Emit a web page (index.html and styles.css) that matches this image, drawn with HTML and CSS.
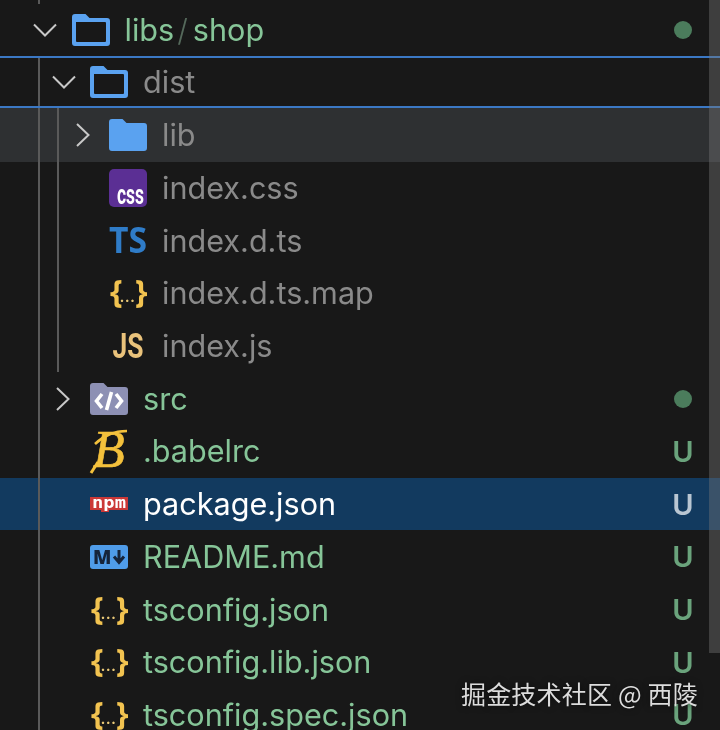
FILE: index.html
```html
<!DOCTYPE html>
<html lang="en">
<head>
<meta charset="utf-8">
<title>Explorer</title>
<link rel="stylesheet" href="styles.css">
</head>
<body>
<svg class="defs" width="0" height="0" aria-hidden="true">
  <defs>
    <symbol id="chev-down" viewBox="0 0 24 24"><path d="M1 6.500 12 17.500 23 6.500" fill="none" stroke="#c8c8c8" stroke-width="2"/></symbol>
    <symbol id="chev-right" viewBox="0 0 24 24"><path d="M6 1 17.500 12 6 23" fill="none" stroke="#c8c8c8" stroke-width="2"/></symbol>
    <symbol id="folder-open" viewBox="0 0 38 38"><path fill="#5aa2f0" fill-rule="evenodd" d="M3 3h10.500l4 4H35a3 3 0 0 1 3 3v22a3 3 0 0 1-3 3H3a3 3 0 0 1-3-3V6a3 3 0 0 1 3-3ZM4 11v19a1 1 0 0 0 1 1h28a1 1 0 0 0 1-1V12a1 1 0 0 0-1-1Z"/></symbol>
    <symbol id="folder-solid" viewBox="0 0 38 38"><path fill="#5aa2f0" d="M3 3h10.500l4 4H35a3 3 0 0 1 3 3v22a3 3 0 0 1-3 3H3a3 3 0 0 1-3-3V6a3 3 0 0 1 3-3Z"/></symbol>
    <symbol id="json" viewBox="0 0 38 38">
      <text class="ic-brace" x="1" y="29">{</text>
      <text class="ic-dots" x="11" y="27.500">...</text>
      <text class="ic-brace" x="26" y="29">}</text>
    </symbol>
  </defs>
</svg>
<main class="tree">
  <div class="row row-sliver"><i class="guide"></i></div>

  <div class="row row-root depth-0">
    <span class="twistie"><svg class="chev"><use href="#chev-down"/></svg></span>
    <svg class="icon"><use href="#folder-open"/></svg>
    <span class="label green">libs<span class="sep">/</span>shop</span>
    <span class="badge"><span class="dot"></span></span>
  </div>

  <div class="row row-drop depth-1">
    <i class="guide"></i>
    <span class="twistie"><svg class="chev"><use href="#chev-down"/></svg></span>
    <svg class="icon"><use href="#folder-open"/></svg>
    <span class="label grey">dist</span>
  </div>

  <div class="row row-hover depth-1">
    <i class="guide"></i><i class="guide"></i>
    <span class="twistie"><svg class="chev"><use href="#chev-right"/></svg></span>
    <svg class="icon"><use href="#folder-solid"/></svg>
    <span class="label grey">lib</span>
  </div>

  <div class="row depth-1">
    <i class="guide"></i><i class="guide"></i>
    <span class="twistie"></span>
    <svg class="icon" viewBox="0 0 38 38">
      <rect x="0" y="0" width="38" height="38" rx="5" fill="#5b2f94"/>
      <text class="ic-css" x="35" y="34.500" text-anchor="end" textLength="27" lengthAdjust="spacingAndGlyphs">css</text>
    </svg>
    <span class="label grey">index.css</span>
  </div>

  <div class="row depth-1">
    <i class="guide"></i><i class="guide"></i>
    <span class="twistie"></span>
    <svg class="icon" viewBox="0 0 38 38"><text class="ic-ts" x="19" y="31" text-anchor="middle" textLength="38" lengthAdjust="spacingAndGlyphs">TS</text></svg>
    <span class="label grey">index.d.ts</span>
  </div>

  <div class="row depth-1">
    <i class="guide"></i><i class="guide"></i>
    <span class="twistie"></span>
    <svg class="icon"><use href="#json"/></svg>
    <span class="label grey">index.d.ts.map</span>
  </div>

  <div class="row depth-1">
    <i class="guide"></i><i class="guide"></i>
    <span class="twistie"></span>
    <svg class="icon" viewBox="0 0 38 38"><text class="ic-js" x="19" y="31" text-anchor="middle" textLength="31" lengthAdjust="spacingAndGlyphs">JS</text></svg>
    <span class="label grey">index.js</span>
  </div>

  <div class="row depth-1">
    <i class="guide"></i>
    <span class="twistie"><svg class="chev"><use href="#chev-right"/></svg></span>
    <svg class="icon" viewBox="0 0 38 38">
      <path fill="#8d90b4" d="M3 3h10.500l4 4H35a3 3 0 0 1 3 3v22a3 3 0 0 1-3 3H3a3 3 0 0 1-3-3V6a3 3 0 0 1 3-3Z"/>
      <path d="M12 14 6.500 21 12 28M26 14 31.500 21 26 28M21.500 12 16.500 30" fill="none" stroke="#fff" stroke-width="3.600"/>
    </svg>
    <span class="label green">src</span>
    <span class="badge"><span class="dot"></span></span>
  </div>

  <div class="row depth-1">
    <i class="guide"></i>
    <span class="twistie"></span>
    <svg class="icon" viewBox="0 0 38 38">
      <text class="ic-babel" x="3" y="35">B</text>
      <path d="M5 12C13 4 25 -1 37 -1" fill="none" stroke="#f4c13c" stroke-width="2.500"/>
      <path d="M1 41 8 30" fill="none" stroke="#f4c13c" stroke-width="3"/>
    </svg>
    <span class="label green">.babelrc</span>
    <span class="badge">U</span>
  </div>

  <div class="row row-active depth-1">
    <i class="guide"></i>
    <span class="twistie"></span>
    <svg class="icon" viewBox="0 0 38 38">
      <path fill="#cb3837" d="M0 12h38v13H19v2h-8v-2H0Z"/>
      <text class="ic-npm" x="19" y="23" text-anchor="middle" textLength="34" lengthAdjust="spacingAndGlyphs">npm</text>
    </svg>
    <span class="label white">package.json</span>
    <span class="badge badge-active">U</span>
  </div>

  <div class="row depth-1">
    <i class="guide"></i>
    <span class="twistie"></span>
    <svg class="icon" viewBox="0 0 38 38">
      <rect x="0" y="7" width="38" height="24" rx="3" fill="#4f9ce9"/>
      <text class="ic-md" x="3" y="25.500">M</text>
      <path d="M29 12v11M24 18.500l5 6 5-6" fill="none" stroke="#16243a" stroke-width="3"/>
    </svg>
    <span class="label green">README.md</span>
    <span class="badge">U</span>
  </div>

  <div class="row depth-1">
    <i class="guide"></i>
    <span class="twistie"></span>
    <svg class="icon"><use href="#json"/></svg>
    <span class="label green">tsconfig.json</span>
    <span class="badge">U</span>
  </div>

  <div class="row depth-1">
    <i class="guide"></i>
    <span class="twistie"></span>
    <svg class="icon"><use href="#json"/></svg>
    <span class="label green">tsconfig.lib.json</span>
    <span class="badge">U</span>
  </div>

  <div class="row depth-1">
    <i class="guide"></i>
    <span class="twistie"></span>
    <svg class="icon"><use href="#json"/></svg>
    <span class="label green">tsconfig.spec.json</span>
    <span class="badge">U</span>
  </div>

  <div class="scrollbar"></div>
  <div class="watermark">掘金技术社区 @ 西陵</div>
</main>
</body>
</html>
```
FILE: styles.css
```css
* { box-sizing: border-box; }

html, body {
  margin: 0;
  height: 100%;
  background: #181818;
}

.defs { position: absolute; }

.tree {
  position: relative;
  width: 720px;
  height: 730px;
  overflow: hidden;
  background: #181818;
  font-family: Inter, "Liberation Sans", sans-serif;
  filter: blur(0.4px);
}

.row {
  display: flex;
  align-items: stretch;
  height: 52.7px;
  padding-right: 22px;
  flex: none;
}

.row > .twistie,
.row > .icon,
.row > .label,
.row > .badge { align-self: center; }

.row-sliver { height: 3.7px; padding-left: 37.5px; }
.row-root { height: 52.3px; }
.row-drop {
  height: 52px;
  border-top: 2px solid #3b78c4;
  border-bottom: 2px solid #3b78c4;
}
.row-hover { height: 53.7px; background: #2e3032; }
.row-active { background: #123a5f; }

.depth-0 { padding-left: 33.5px; }
.depth-1 { padding-left: 37.5px; }

.guide {
  display: block;
  flex: none;
  width: 2px;
  margin-right: 12.5px;
  background: #5a5a5a;
}
.guide + .guide { margin-left: 4.5px; }

.twistie {
  display: block;
  flex: none;
  width: 38px;
  height: 24px;
}
.chev { display: block; width: 24px; height: 24px; margin-left: -1px; }
.row-drop .chev, .row-hover .chev { margin-left: 0; }

.icon {
  display: block;
  flex: none;
  width: 38px;
  height: 38px;
  overflow: visible;
}

.label {
  margin-left: 15px;
  font-size: 30.6px;
  line-height: 40px;
  white-space: nowrap;
  flex: 1 1 auto;
}
.green { color: #86c598; }
.grey { color: #8a8a8a; }
.white { color: #ffffff; }
.sep { margin: 0 5px 0 3px; color: #55695b; font-weight: 300; }

.badge {
  display: flex;
  align-items: center;
  justify-content: center;
  flex: none;
  width: 30px;
  height: 40px;
  font-size: 29px;
  font-weight: 600;
  color: #6aa37c;
}
.badge-active { color: #b9c6d2; }

.dot {
  display: block;
  width: 18px;
  height: 18px;
  border-radius: 50%;
  background: #4b7c5c;
}

.ic-brace { font: 700 32px "Open Sans", sans-serif; fill: #f2c350; }
.ic-dots { font: 700 14px "Open Sans", sans-serif; letter-spacing: 1.200px; fill: #e9c877; }
.ic-css { font: 700 27px "Roboto", sans-serif; fill: #ffffff; }
.ic-ts { font: 700 36px "Open Sans", sans-serif; fill: #2f7cc8; }
.ic-js { font: 700 35px "Roboto", sans-serif; fill: #e9c27b; }
.ic-npm { font: 700 15px "DejaVu Sans Mono", monospace; fill: #ffffff; }
.ic-md { font: 800 19px "Open Sans", sans-serif; fill: #16243a; }
.ic-babel { font: italic 400 52px "Liberation Serif", serif; fill: #f4c13c; stroke: #f4c13c; stroke-width: 0.600px; }

.scrollbar {
  position: absolute;
  top: 0;
  right: 0;
  width: 11px;
  height: 653px;
  background: rgba(120, 120, 120, 0.4);
}

.watermark {
  position: absolute;
  right: 22px;
  top: 675px;
  font: 400 25px/36px "Noto Sans CJK SC", sans-serif;
  letter-spacing: 0.2px;
  color: #dcdcdc;
  white-space: nowrap;
  text-shadow: 0 0 6px rgba(0, 0, 0, 0.6);
}
```
